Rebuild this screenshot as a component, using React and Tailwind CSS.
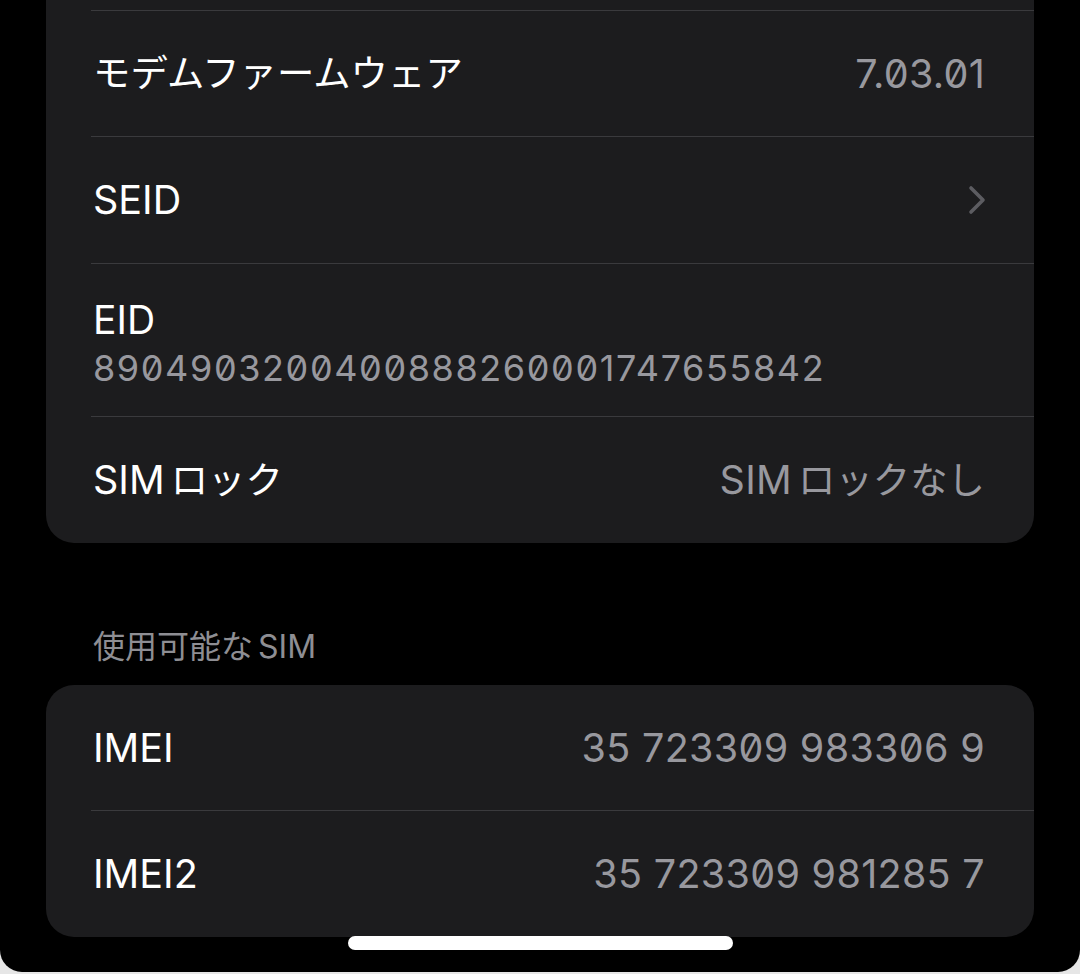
import React from "react";

function Sep() {
  return <div className="ml-[45px] h-px bg-[#3a3a3d]" />;
}

function J({ children, gap }) {
  return <span className={`text-[37.4px] tracking-normal ${gap ? "ml-[6px]" : ""}`}>{children}</span>;
}

function Row({ label, value, chevron, h }) {
  return (
    <div className={`flex items-center justify-between pl-[47px] pr-[49px] ${h}`}>
      <span className="text-[39.5px] leading-[48px] text-white">{label}</span>
      {value && <span className="text-[39.5px] leading-[48px] text-[#98989e] tracking-[0.3px] [font-feature-settings:'zero']">{value}</span>}
      {chevron && (
        <svg width="18" height="30" viewBox="0 0 18 30" className="mr-[-1px]">
          <path d="M3 3 L15 15 L3 27" fill="none" stroke="#5c5c61" strokeWidth="3.6" strokeLinecap="round" strokeLinejoin="round" />
        </svg>
      )}
    </div>
  );
}

export default function App() {
  return (
    <div className="w-[1080px] h-[974px] bg-[#e6e6e6] overflow-hidden font-['Inter','Noto_Sans_CJK_JP',sans-serif]">
      <div className="relative h-[972px] bg-black rounded-b-[22px] overflow-hidden">
        <div className="ml-[46px] w-[988px] -mt-[116px] bg-[#1c1c1e] rounded-[28px] overflow-hidden">
          <div className="h-[126px]" />
          <Sep />
          <Row label={<J>モデムファームウェア</J>} value="7.03.01" h="h-[125px]" />
          <Sep />
          <Row label="SEID" chevron h="h-[126px]" />
          <Sep />
          <div className="h-[152px] pl-[47px] pt-[32px] flex flex-col">
            <span className="text-[39px] leading-[48px] text-white">EID</span>
            <span className="mt-[2px] text-[36px] leading-[44px] text-[#98989e] tracking-[1.6px] [font-feature-settings:'zero']">
              8904903200400888260001747655842
            </span>
          </div>
          <Sep />
          <Row
            label={<>SIM<J gap>ロック</J></>}
            value={<>SIM<J gap>ロックなし</J></>}
            h="h-[126px]"
          />
        </div>

        <div className="mt-[84px] pl-[93px] h-[40px] text-[32px] leading-[40px] text-[#8e8e93]">
          使用可能な<span className="ml-[5px]">SIM</span>
        </div>

        <div className="mt-[18px] ml-[46px] w-[988px] bg-[#1c1c1e] rounded-[28px] overflow-hidden">
          <Row label="IMEI" value="35 723309 983306 9" h="h-[125px]" />
          <Sep />
          <Row label="IMEI2" value="35 723309 981285 7" h="h-[126px]" />
        </div>

        <div className="absolute left-[348px] top-[936px] w-[385px] h-[14px] rounded-full bg-white" />
      </div>
    </div>
  );
}
